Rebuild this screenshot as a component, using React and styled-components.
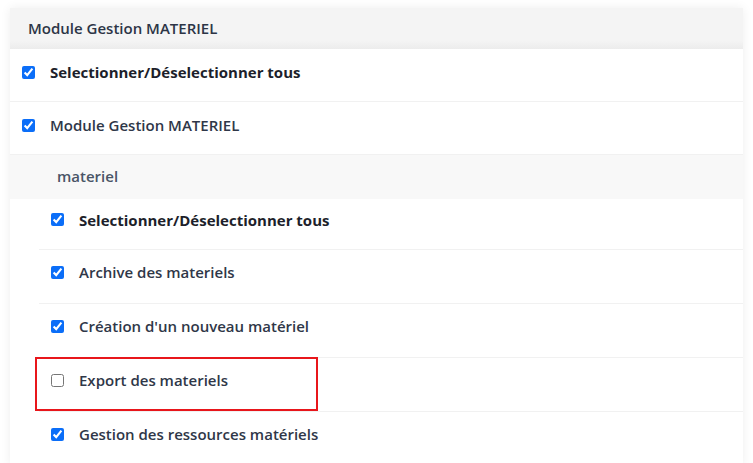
import React, { useState } from "react";
import styled, { createGlobalStyle } from "styled-components";

const GlobalStyle = createGlobalStyle`
  body {
    margin: 0;
    background: #ffffff;
    font-family: "Open Sans", "Noto Sans", sans-serif;
  }
`;

const Page = styled.div`
  padding: 8px 10px 0 10px;
`;

const Card = styled.div`
  background: #ffffff;
  box-shadow: 0 0 10px rgba(0, 0, 0, 0.07);
`;

const Header = styled.div`
  height: 41px;
  box-sizing: border-box;
  display: flex;
  align-items: center;
  padding: 0 0 2px 18px;
  background: linear-gradient(to bottom, #f4f4f4 80%, #ececec 100%);
  color: #2c3546;
  font-size: 15px;
  font-weight: 600;
`;

const Row = styled.label`
  position: relative;
  box-sizing: border-box;
  display: flex;
  align-items: center;
  gap: 15px;
  height: ${(p) => p.$h || 53}px;
  padding: 0 0 ${(p) => p.$shift || 6}px 12px;
  border-bottom: 1px solid #f1f1f1;
  color: ${(p) => (p.$bold ? "#1d1f2b" : "#2f3748")};
  font-size: 15px;
  font-weight: ${(p) => (p.$bold ? 700 : 600)};
  cursor: pointer;
`;

const Check = styled.input`
  width: 13px;
  height: 13px;
  margin: 0;
  accent-color: #0b6ef8;
  flex-shrink: 0;
`;

const Section = styled.div`
  height: 44px;
  box-sizing: border-box;
  display: flex;
  align-items: center;
  padding: 0 0 2px 47px;
  background: #f8f8f8;
  color: #4a5567;
  font-size: 15px;
  font-weight: 600;
`;

const SubList = styled.div`
  margin-left: 29px;
`;

const Highlight = styled.div`
  position: absolute;
  left: -4px;
  top: -1px;
  width: 283px;
  height: 54px;
  box-sizing: border-box;
  border: 2px solid #e8161b;
  pointer-events: none;
`;

const items = [
  { label: "Archive des materiels", checked: true },
  { label: "Création d'un nouveau matériel", checked: true },
  { label: "Export des materiels", checked: false, highlight: true },
  { label: "Gestion des ressources matériels", checked: true },
];

export default function App() {
  const [checks, setChecks] = useState(items.map((i) => i.checked));

  const toggle = (idx) => {
    setChecks((prev) => prev.map((c, i) => (i === idx ? !c : c)));
  };

  return (
    <>
      <GlobalStyle />
      <Page>
        <Card>
          <Header>Module Gestion MATERIEL</Header>
          <Row $bold>
            <Check type="checkbox" defaultChecked />
            Selectionner/Déselectionner tous
          </Row>
          <Row>
            <Check type="checkbox" defaultChecked />
            Module Gestion MATERIEL
          </Row>
          <Section>materiel</Section>
          <SubList>
            <Row $bold $h={51} $shift={9}>
              <Check type="checkbox" defaultChecked />
              Selectionner/Déselectionner tous
            </Row>
            {items.map((item, idx) => (
              <Row key={item.label} $h={54} $shift={9}>
                <Check
                  type="checkbox"
                  checked={checks[idx]}
                  onChange={() => toggle(idx)}
                />
                {item.label}
                {item.highlight && <Highlight />}
              </Row>
            ))}
          </SubList>
        </Card>
      </Page>
    </>
  );
}
